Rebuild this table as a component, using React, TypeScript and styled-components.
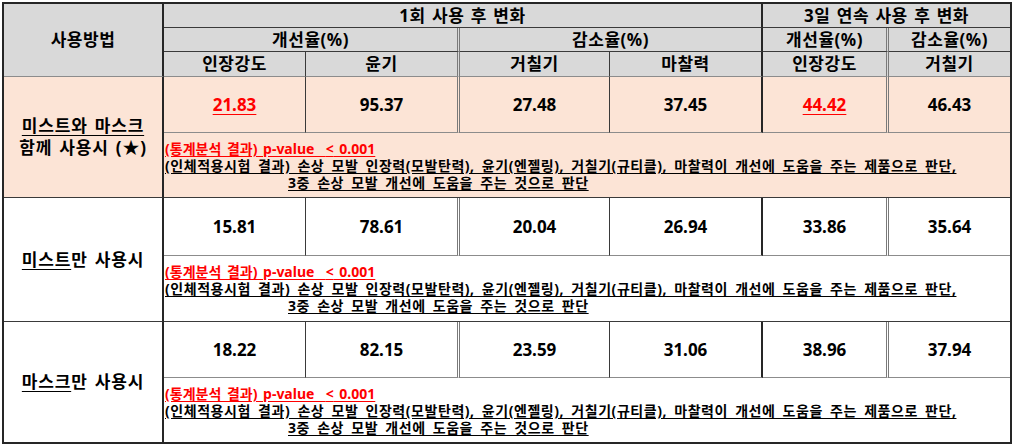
import React from "react";
import styled, { createGlobalStyle, css } from "styled-components";

const GlobalStyle = createGlobalStyle`
  html, body { margin: 0; padding: 0; background: #ffffff; }
  body { font-family: "Noto Sans", "Noto Sans CJK KR", sans-serif; color: #000; }
`;

type Line = "thick" | "thin" | "double" | "grey" | "none";

const lineCss = (l: Line) => {
  switch (l) {
    case "thick":
      return "2px solid #262626";
    case "thin":
      return "1px solid #3a3a3a";
    case "double":
      return "3px double #7a7a7a";
    case "grey":
      return "1px solid #8c8c8c";
    default:
      return "0 none";
  }
};

const Wrapper = styled.div`
  padding: 2px 0 0 2px;
`;

const Table = styled.div`
  display: grid;
  width: 1010px;
  box-sizing: border-box;
  border: 2px solid #262626;
  grid-template-columns: 160px 142px 154px 150px 153px 126px 121px;
  grid-template-rows: 24px 24px 25px 56px 65px 58px 66px 56px 64px;
`;

const Cell = styled.div<{
  $col: string;
  $row: string;
  $right: Line;
  $bottom: Line;
  $bg: string;
}>`
  grid-column: ${(p) => p.$col};
  grid-row: ${(p) => p.$row};
  box-sizing: border-box;
  background: ${(p) => p.$bg};
  border-right: ${(p) => lineCss(p.$right)};
  border-bottom: ${(p) => lineCss(p.$bottom)};
  display: flex;
  align-items: center;
  justify-content: center;
  min-width: 0;
  overflow: hidden;
`;

const HeadText = styled.span`
  font-family: "Noto Sans", "Noto Sans CJK KR", sans-serif;
  font-weight: 700;
  font-size: 17px;
  line-height: 20px;
  letter-spacing: 0.5px;
  word-spacing: 1.5px;
  white-space: nowrap;
`;

const NumText = styled.span<{ $red?: boolean }>`
  font-family: "Noto Sans", "Noto Sans CJK KR", sans-serif;
  font-weight: 700;
  font-size: 17px;
  line-height: 20px;
  ${(p) =>
    p.$red &&
    css`
      color: #ff0000;
      text-decoration: underline;
      text-underline-offset: 3px;
    `}
`;

const LabelBox = styled.div`
  display: flex;
  flex-direction: column;
  align-items: center;
  font-family: "Noto Sans", "Noto Sans CJK KR", sans-serif;
  font-weight: 700;
  font-size: 17px;
  line-height: 22px;
  letter-spacing: 0.8px;
  word-spacing: 2px;
  white-space: pre;
`;

const U = styled.span`
  text-decoration: underline;
  text-underline-offset: 3px;
`;

const NoteBox = styled.div`
  align-self: center;
  width: 100%;
  display: flex;
  flex-direction: column;
  align-items: flex-start;
  padding-left: 1px;
  box-sizing: border-box;
`;

const NoteLine = styled.div<{ $red?: boolean; $indent?: number }>`
  font-family: "Noto Sans", "Noto Sans CJK KR", sans-serif;
  font-weight: 700;
  font-size: 14px;
  line-height: 17px;
  letter-spacing: ${(p) => (p.$red ? "0px" : "0.55px")};
  word-spacing: ${(p) => (p.$red ? "2px" : "3px")};
  white-space: pre;
  color: ${(p) => (p.$red ? "#ff0000" : "#000")};
  padding-left: ${(p) => p.$indent ?? 0}px;
  text-decoration: underline;
  text-underline-offset: 2px;
`;

const GREY = "#d9d9d9";
const PEACH = "#fce4d6";
const WHITE = "#ffffff";

const colRight: Line[] = ["thick", "thin", "double", "thin", "thick", "double", "none"];

type Group = {
  label: React.ReactNode;
  values: { v: string; red?: boolean }[];
  bg: string;
  last?: boolean;
};

const groups: Group[] = [
  {
    label: (
      <>
        <U>미스트와 마스크</U>
        <span>함께 사용시 (★)</span>
      </>
    ),
    values: [
      { v: "21.83", red: true },
      { v: "95.37" },
      { v: "27.48" },
      { v: "37.45" },
      { v: "44.42", red: true },
      { v: "46.43" },
    ],
    bg: PEACH,
  },
  {
    label: (
      <span>
        <U>미스트</U>만 사용시
      </span>
    ),
    values: [
      { v: "15.81" },
      { v: "78.61" },
      { v: "20.04" },
      { v: "26.94" },
      { v: "33.86" },
      { v: "35.64" },
    ],
    bg: WHITE,
  },
  {
    label: (
      <span>
        <U>마스크</U>만 사용시
      </span>
    ),
    values: [
      { v: "18.22" },
      { v: "82.15" },
      { v: "23.59" },
      { v: "31.06" },
      { v: "38.96" },
      { v: "37.94" },
    ],
    bg: WHITE,
    last: true,
  },
];

const subHeads = ["인장강도", "윤기", "거칠기", "마찰력", "인장강도", "거칠기"];

export default function App() {
  return (
    <>
      <GlobalStyle />
      <Wrapper>
        <Table>
          <Cell $col="1" $row="1 / 4" $right="thick" $bottom="grey" $bg={GREY}>
            <HeadText>사용방법</HeadText>
          </Cell>
          <Cell $col="2 / 6" $row="1" $right="thick" $bottom="thin" $bg={GREY}>
            <HeadText>1회 사용 후 변화</HeadText>
          </Cell>
          <Cell $col="6 / 8" $row="1" $right="none" $bottom="thin" $bg={GREY}>
            <HeadText>3일 연속 사용 후 변화</HeadText>
          </Cell>
          <Cell $col="2 / 4" $row="2" $right="double" $bottom="thin" $bg={GREY}>
            <HeadText>개선율(%)</HeadText>
          </Cell>
          <Cell $col="4 / 6" $row="2" $right="thick" $bottom="thin" $bg={GREY}>
            <HeadText>감소율(%)</HeadText>
          </Cell>
          <Cell $col="6" $row="2" $right="double" $bottom="thin" $bg={GREY}>
            <HeadText>개선율(%)</HeadText>
          </Cell>
          <Cell $col="7" $row="2" $right="none" $bottom="thin" $bg={GREY}>
            <HeadText>감소율(%)</HeadText>
          </Cell>
          {subHeads.map((h, i) => (
            <Cell
              key={"sh" + i}
              $col={String(i + 2)}
              $row="3"
              $right={colRight[i + 1]}
              $bottom="grey"
              $bg={GREY}
            >
              <HeadText>{h}</HeadText>
            </Cell>
          ))}
          {groups.map((g, gi) => {
            const r = 4 + gi * 2;
            const bottom: Line = g.last ? "none" : "thin";
            return (
              <React.Fragment key={"g" + gi}>
                <Cell
                  $col="1"
                  $row={`${r} / ${r + 2}`}
                  $right="thick"
                  $bottom={bottom}
                  $bg={g.bg}
                >
                  <LabelBox>{g.label}</LabelBox>
                </Cell>
                {g.values.map((val, i) => (
                  <Cell
                    key={"v" + i}
                    $col={String(i + 2)}
                    $row={String(r)}
                    $right={colRight[i + 1]}
                    $bottom="grey"
                    $bg={g.bg}
                  >
                    <NumText $red={val.red}>{val.v}</NumText>
                  </Cell>
                ))}
                <Cell
                  $col="2 / 8"
                  $row={String(r + 1)}
                  $right="none"
                  $bottom={bottom}
                  $bg={g.bg}
                >
                  <NoteBox>
                    <NoteLine $red>(통계분석 결과) p-value  {"<"} 0.001</NoteLine>
                    <NoteLine>
                      (인체적용시험 결과) 손상 모발 인장력(모발탄력), 윤기(엔젤링), 거칠기(규티클), 마찰력이 개선에 도움을 주는 제품으로 판단,
                    </NoteLine>
                    <NoteLine $indent={123}>3중 손상 모발 개선에 도움을 주는 것으로 판단</NoteLine>
                  </NoteBox>
                </Cell>
              </React.Fragment>
            );
          })}
        </Table>
      </Wrapper>
    </>
  );
}
